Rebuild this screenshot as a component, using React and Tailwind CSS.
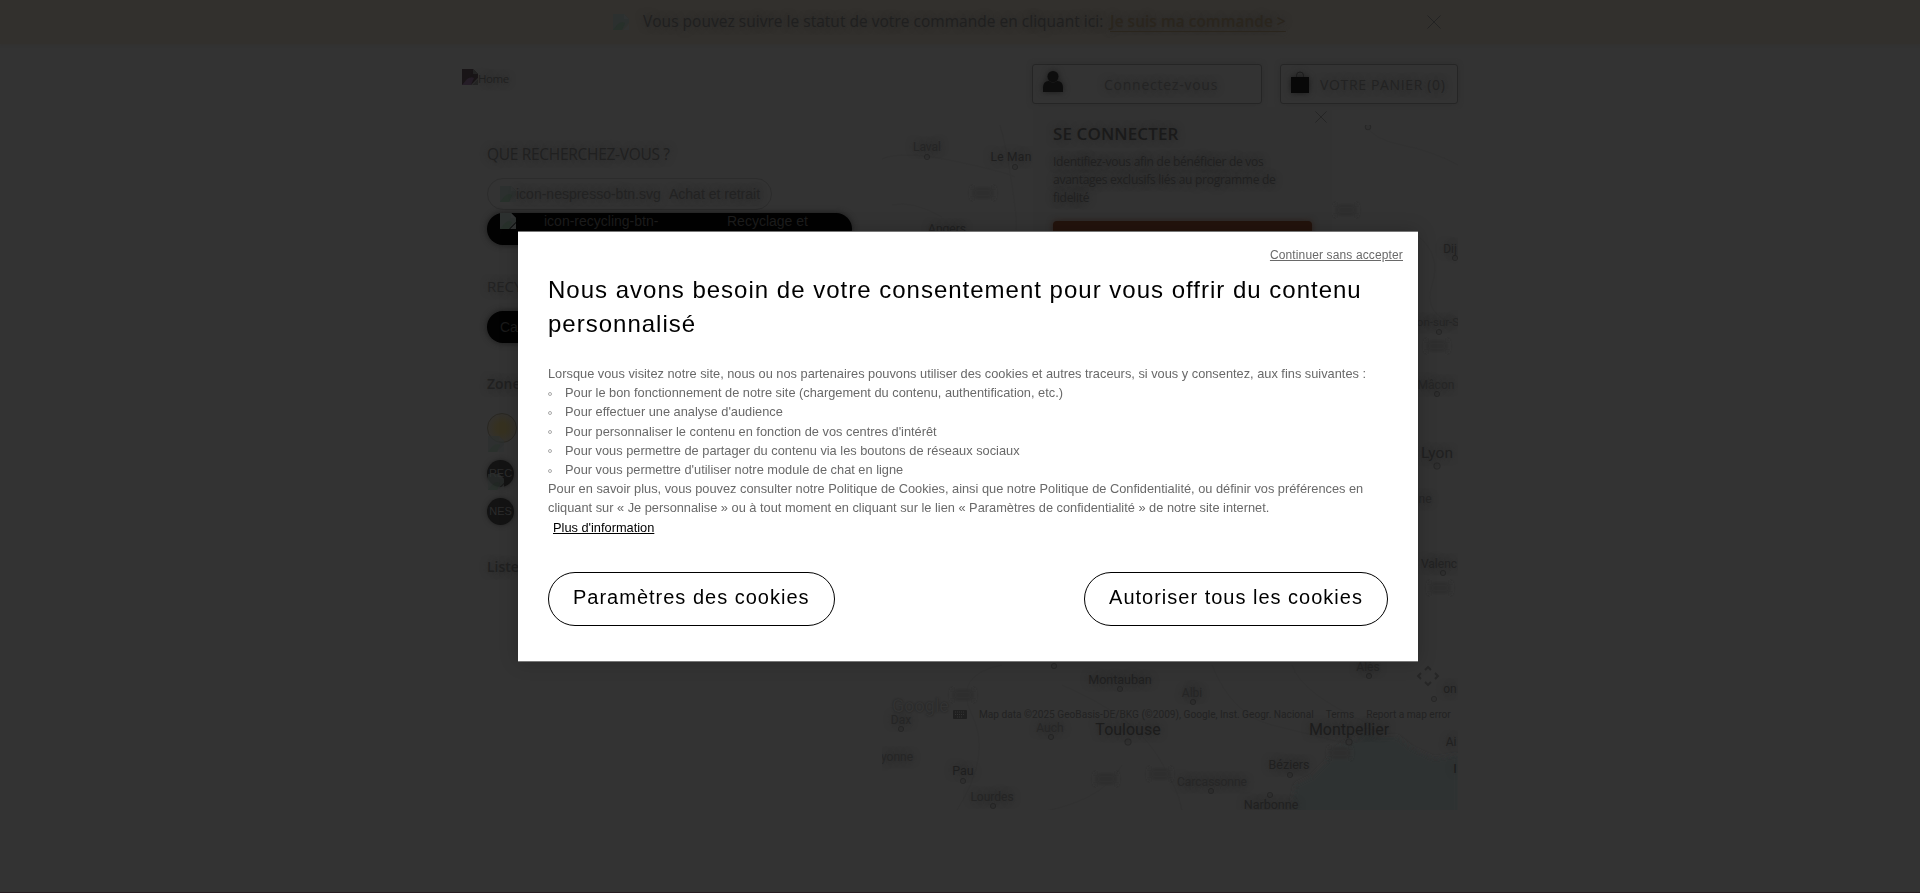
import React from "react";

const ui = "font-['Open_Sans','Noto_Sans',sans-serif]";
const glow = "[text-shadow:0_0_7px_#262626]";

function Broken({ dark = false }) {
  return (
    <svg className="block size-4 shrink-0" viewBox="0 0 16 16">
      <path d="M0 0H11L16 5V9L9 16H0Z" fill={dark ? "#191517" : "#2c302f"} />
      <path d="M0 16L5 10Q9 7 12 9L9 16Z" fill={dark ? "#251d27" : "#27302a"} />
      <path d="M11 0V5H16M16 10L10 16H16Z" fill={dark ? "#242424" : "#303232"} />
    </svg>
  );
}

function Cross({ className }) {
  return (
    <svg className={className} viewBox="0 0 14 14" fill="none" stroke="#232323" strokeWidth="1">
      <path d="M.5 .5L13.5 13.5M13.5 .5L.5 13.5" />
    </svg>
  );
}

// Label centre positions on the map canvas: [text, x, y, size class]
const places = [
  ["Laval", 45, 22, "text-[12px] text-[#252525]"],
  ["Le Man", 129, 32, "text-[12px] tracking-[0.3px] text-[#1e1e1e]"],
  ["Angers", 65, 104, "text-[12px] text-[#202020]"],
  ["Dij", 568, 124, "text-[12px] text-[#202020]"],
  ["on-sur-S", 556, 198, "text-[11.5px] text-[#252525]"],
  ["Mâcon", 554, 260, "text-[12px] text-[#252525]"],
  ["Lyon", 555, 329, "text-[15.5px] text-[#202020]"],
  ["ne", 543, 374, "text-[12px] text-[#252525]"],
  ["Valenc", 557, 439, "text-[12px] text-[#222]"],
  ["Dax", 19, 595, "text-[12px] text-[#252525]"],
  ["yonne", 15, 632, "text-[12px] text-[#252525]"],
  ["Pau", 81, 646, "text-[12.5px] text-[#1e1e1e]"],
  ["Lourdes", 110, 672, "text-[12px] text-[#242424]"],
  ["Auch", 168, 603, "text-[12px] text-[#262626]"],
  ["Toulouse", 246, 605, "text-[16px] text-[#1c1c1c]"],
  ["Montauban", 238, 555, "text-[12.5px] text-[#202020]"],
  ["Albi", 310, 568, "text-[12px] text-[#252525]"],
  ["Alès", 486, 542, "text-[12px] text-[#252525]"],
  ["Carcassonne", 330, 657, "text-[12px] text-[#262626]"],
  ["Béziers", 407, 640, "text-[12.5px] text-[#202020]"],
  ["Narbonne", 389, 680, "text-[12.5px] text-[#202020]"],
  ["Montpellier", 467, 605, "text-[16px] text-[#1c1c1c]"],
  ["on", 568, 564, "text-[12px] text-[#202020]"],
  ["Ai", 569, 617, "text-[12px] text-[#202020]"],
  ["I", 573, 643, "text-[13px] text-[#1a1a1a]"],
];

const dots = [
  [45, 32, 2.6], [133, 42, 2.6], [486, 2, 2.8], [573, 133, 2.6], [557, 207, 2.6], [555, 269, 2.6],
  [555, 341, 3.2], [561, 448, 2.6], [19, 604, 2.6], [81, 656, 2.6], [111, 681, 2.6], [169, 612, 2.6],
  [246, 617, 3.2], [238, 564, 2.6], [311, 577, 2.6], [487, 551, 2.6], [172, 541, 2.6], [329, 666, 2.6],
  [408, 650, 2.6], [388, 670, 2.6], [467, 617, 3.2], [552, 574, 2.6],
];

const shields = [[101, 68], [464, 85], [555, 221], [558, 463], [81, 570], [224, 654], [278, 649], [458, 628]];

function MapCanvas() {
  return (
    <section className="relative h-[685px] w-[576px] shrink-0 overflow-hidden bg-[#333]">
      <svg className="block h-full w-full" viewBox="0 0 576 685">
        <defs>
          <filter id="soft" x="-20%" y="-20%" width="140%" height="140%">
            <feGaussianBlur stdDeviation="2" />
          </filter>
        </defs>
        <path
          d="M408 690L414 660L430 652L444 638L452 626L462 618L476 614L484 606L495 612L515 612L530 624L552 634L576 630V690Z"
          fill="#2e3132"
          filter="url(#soft)"
        />
        <g fill="none" stroke="#313131" strokeWidth="1">
          <path d="M0 34Q20 25 72 36T133 52M10 80Q30 75 60 92M118 0Q124 20 130 60T134 105" />
          <path d="M484 0Q490 14 520 20T576 40M535 110Q560 130 550 160T576 200" />
          <path d="M75 685Q110 630 90 590T120 540M180 560Q250 590 275 630T300 690" />
          <path d="M330 540Q350 590 390 600T470 620M410 540Q420 570 490 600M140 690Q220 680 240 640" />
        </g>
        {shields.map(([x, y]) => (
          <rect key={x + "-" + y} x={x - 11} y={y - 6} width="22" height="12" rx="3" fill="#2d2d2d" filter="url(#soft)" />
        ))}
        {dots.map(([x, y, r]) => (
          <circle key={x + "-" + y} cx={x} cy={y} r={r} fill="#303030" stroke="#272727" />
        ))}
        <g fill="none" stroke="#262626" strokeWidth="1.8">
          <path d="M543 545L546 542L549 545M543 557L546 560L549 557M539 548L536 551L539 554M553 548L556 551L553 554" />
        </g>
        <g fill="#202020">
          <rect x="71" y="585" width="14" height="9" rx="1" />
          <path d="M73 587H83M73 589.500H83M75 592H81" stroke="#333" strokeDasharray="1 1" />
        </g>
      </svg>
      {places.map(([name, x, y, look]) => (
        <span
          key={name}
          className={`absolute -translate-x-1/2 -translate-y-1/2 leading-none whitespace-nowrap font-[Roboto,sans-serif] ${glow} ${look}`}
          style={{ left: x, top: y }}
        >
          {name}
        </span>
      ))}
      <span className="absolute top-[569px] left-[10px] font-[Roboto,sans-serif] text-[18px] leading-6 text-[#333] [text-shadow:0_0_2px_#202020]">
        Google
      </span>
      <div className="absolute top-[583px] left-[97px] flex gap-[12px] font-[Roboto,sans-serif] text-[10.15px] leading-[14px] whitespace-nowrap text-[#222]">
        <span>Map data ©2025 GeoBasis-DE/BKG (©2009), Google, Inst. Geogr. Nacional</span>
        <span>Terms</span>
        <span>Report a map error</span>
      </div>
    </section>
  );
}

function LoginPanel() {
  return (
    <div className={`absolute top-[107px] left-[1033px] h-[160px] w-[299px] bg-[#323232] px-5 pt-[15px] ${ui}`}>
      <Cross className="absolute top-1 right-[5px] size-3" />
      <h2 className={`text-[17px] leading-6 font-semibold tracking-[0.1px] text-[#1a1a1a] ${glow}`}>SE CONNECTER</h2>
      <p className={`mt-[7px] text-[12px] leading-[18px] tracking-[-0.26px] whitespace-nowrap text-[#202020] ${glow}`}>
        Identifiez-vous afin de bénéficier de vos
        <br />
        avantages exclusifs liés au programme de
        <br />
        fidelité
      </p>
      <div className="mt-[14px] h-10 rounded bg-[#23130c] shadow-[0_0_6px_#2a1e19]" />
    </div>
  );
}

function Page() {
  return (
    <div className="h-[893px] w-full overflow-hidden border-b border-[#251b20] bg-[#333]">
      <div className="mb-[2px] flex h-[44px] items-center bg-[#32302d] pr-[479px] pl-[613px] shadow-[0_0_3px_#32302d]">
        <Broken />
        <p className={`ml-[14px] text-[15.5px] whitespace-nowrap text-[#1f1f1f] ${ui} ${glow}`}>
          <span className="inline-block w-[467px] tracking-[0.02px]">
            Vous pouvez suivre le statut de votre commande en cliquant ici:
          </span>
          <a className="font-semibold text-[#2a251d] underline underline-offset-4">Je suis ma commande &gt;</a>
        </p>
        <Cross className="ml-auto size-[14px]" />
      </div>

      <header className={`flex h-[79px] items-start pt-[18px] pr-[462px] pl-[462px] ${ui}`}>
        <div className="mt-[5px] flex">
          <Broken dark />
          <span className={`pt-[2px] text-[11.5px] leading-4 tracking-[-0.4px] text-[#202020] ${glow}`}>Home</span>
        </div>
        <button className="ml-auto flex h-10 w-[230px] items-center rounded-[3px] border border-[#252525] pl-[10px] shadow-[0_0_5px_#2e2e2e]">
          <svg className="-mt-1 h-[22px] w-5 drop-shadow-[0_0_3px_#1a1a1a]" viewBox="0 0 20 22" fill="#0d0d0d">
            <circle cx="10" cy="5.500" r="5.500" />
            <path d="M0 21V17Q0 10 6 10Q10 13.500 14 10Q20 10 20 17V21Z" />
          </svg>
          <span className={`ml-[41px] text-[14px] tracking-[0.75px] text-[#242424] ${glow}`}>Connectez-vous</span>
        </button>
        <button className="ml-[18px] flex h-10 w-[178px] items-center rounded-[3px] border border-[#252525] pl-[10px] shadow-[0_0_5px_#2e2e2e]">
          <svg className="-mt-1 h-[22px] w-[18px] shrink-0 drop-shadow-[0_0_3px_#1a1a1a]" viewBox="0 0 18 22" fill="#080808">
            <path d="M0 6H18V22H0Z" />
            <path d="M5.500 6V4.500A3.500 3.500 0 0 1 12.500 4.500V6" fill="none" stroke="#1c1c1c" />
          </svg>
          <span className={`ml-[11px] text-[14px] tracking-[0.65px] whitespace-nowrap text-[#222] ${glow}`}>VOTRE PANIER (0)</span>
        </button>
      </header>

      <main className="flex pl-[487px]">
        <aside className={`w-[395px] shrink-0 pt-[17px] ${ui}`}>
          <h3 className={`text-[15.5px] leading-6 tracking-[-0.3px] text-[#202020] ${glow}`}>QUE RECHERCHEZ-VOUS ?</h3>
          <div className="mt-3 flex h-8 w-[285px] items-center rounded-full border border-[#2c2c2c] pl-3 font-['Liberation_Sans',sans-serif] text-[14px] text-[#222]">
            <Broken />
            <span className={`w-[153px] ${glow}`}>icon-nespresso-btn.svg</span>
            <span className={glow}>Achat et retrait</span>
          </div>
          <div className="mt-[3px] flex h-8 w-[365px] items-start rounded-[16px] bg-[#020202] pl-[13px] font-['Liberation_Sans',sans-serif] text-[14px] leading-4 text-[#1d1d1d] shadow-[0_0_6px_#1a1a1a]">
            <Broken />
            <span className="ml-7 w-[183px]">icon-recycling-btn-</span>
            <span>Recyclage et</span>
          </div>
          <h3 className={`mt-[29px] text-[15px] leading-6 text-[#222] ${glow}`}>RECY</h3>
          <div className="mt-[13px] flex h-8 w-[200px] items-center rounded-full bg-[#020202] pl-[13px] font-['Liberation_Sans',sans-serif] text-[14px] text-[#1a1a1a] shadow-[0_0_6px_#1a1a1a]">
            Ca
          </div>
          <h3 className={`mt-[29px] text-[14px] leading-6 font-semibold text-[#202020] ${glow}`}>Zone</h3>
          <div className="mt-[17px] h-[47px]">
            <div className="size-[30px] rounded-full border border-[#292722] bg-[radial-gradient(circle,#363120_25%,#33312d_70%)]" />
            <div className="-mt-[7px] ml-px opacity-70"><Broken /></div>
          </div>
          <div className="h-[38px]">
            <div className="flex size-[27px] items-center justify-center overflow-hidden rounded-full bg-[#131313] font-['Liberation_Sans',sans-serif] text-[11px] text-[#2b2b2b] shadow-[0_0_5px_#202020]">REC</div>
            <div className="-mt-[13px] ml-px opacity-70"><Broken /></div>
          </div>
          <div className="flex size-[27px] items-center justify-center overflow-hidden rounded-full bg-[#131313] font-['Liberation_Sans',sans-serif] text-[11px] text-[#2b2b2b] shadow-[0_0_5px_#202020]">NES</div>
          <h3 className={`mt-[30px] text-[14px] leading-6 font-semibold text-[#202020] ${glow}`}>Liste</h3>
        </aside>
        <MapCanvas />
      </main>
      <LoginPanel />
    </div>
  );
}

const purposes = [
  "Pour le bon fonctionnement de notre site (chargement du contenu, authentification, etc.)",
  "Pour effectuer une analyse d'audience",
  "Pour personnaliser le contenu en fonction de vos centres d'intérêt",
  "Pour vous permettre de partager du contenu via les boutons de réseaux sociaux",
  "Pour vous permettre d'utiliser notre module de chat en ligne",
];

function ConsentDialog() {
  return (
    <div className="fixed inset-0 flex items-center justify-center pl-4">
      <div
        role="dialog"
        className="flex h-[431px] w-[900px] flex-col border-y border-[#777] bg-white px-[30px] font-['Liberation_Sans',Arial,sans-serif] shadow-[0_0_18px_rgba(0,0,0,0.2)]"
      >
        <a className="mt-[15px] -mr-[15px] self-end text-[12px] leading-4 tracking-[0.13px] text-[#696969] underline">
          Continuer sans accepter
        </a>
        <h1 className="mt-[10px] text-[24px] leading-[34px] tracking-[1px] whitespace-nowrap text-black">
          Nous avons besoin de votre consentement pour vous offrir du contenu
          <br />
          personnalisé
        </h1>
        <div className="mt-[23px] text-[12.8px] leading-[19.2px] whitespace-nowrap text-[#696969]">
          <p>
            Lorsque vous visitez notre site, nous ou nos partenaires pouvons utiliser des cookies et autres traceurs, si
            vous y consentez, aux fins suivantes :
          </p>
          <ul>
            {purposes.map((text) => (
              <li key={text} className="flex items-center">
                <span className="mt-[2px] mr-[13px] size-1 rounded-full border border-[#aaa]" />
                {text}
              </li>
            ))}
          </ul>
          <p>
            Pour en savoir plus, vous pouvez consulter notre Politique de Cookies, ainsi que notre Politique de
            Confidentialité, ou définir vos préférences en
            <br />
            cliquant sur « Je personnalise » ou à tout moment en cliquant sur le lien « Paramètres de confidentialité »
            de notre site internet.
          </p>
          <a className="ml-[5px] inline-block text-black underline">Plus d'information</a>
        </div>
        <div className="mt-[35px] flex justify-between text-[20px] tracking-[1px] text-black">
          <button className="h-[54px] w-[286.5px] rounded-full border border-black pb-1 whitespace-nowrap">
            Paramètres des cookies
          </button>
          <button className="h-[54px] w-[304px] rounded-full border border-black pb-1 whitespace-nowrap">
            Autoriser tous les cookies
          </button>
        </div>
      </div>
    </div>
  );
}

export default function App() {
  return (
    <div className="relative">
      <Page />
      <ConsentDialog />
    </div>
  );
}
